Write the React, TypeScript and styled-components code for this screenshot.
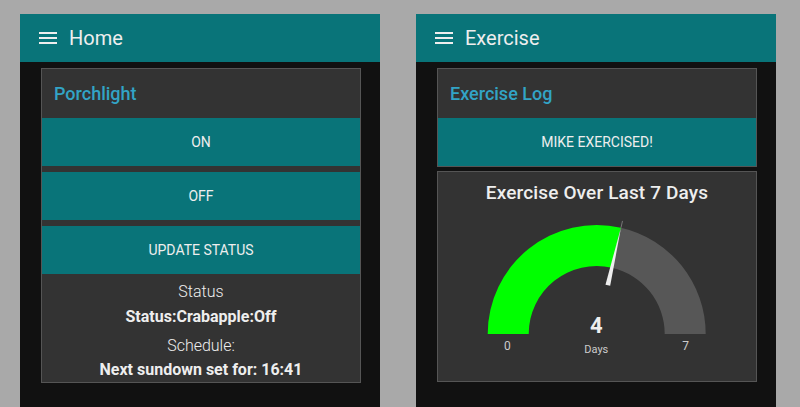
import React from "react";
import styled, { createGlobalStyle } from "styled-components";

const Global = createGlobalStyle`
  html, body { margin: 0; padding: 0; background: #a9a9a9; }
  body { font-family: Roboto, "Liberation Sans", sans-serif; }
`;

const Page = styled.div`
  display: flex;
  gap: 36px;
  padding: 14px 0 0 20px;
  height: 407px;
  box-sizing: border-box;
  overflow: hidden;
`;

const Panel = styled.div`
  width: 360px;
  height: 393px;
  background: #111111;
  display: flex;
  flex-direction: column;
`;

const Header = styled.div`
  height: 48px;
  background: #097479;
  display: flex;
  align-items: center;
  padding-left: 19px;
  gap: 12px;
  color: #eeeeee;
  font-size: 20px;
  flex-shrink: 0;
`;

const Content = styled.div`
  padding: 6px 0 0 21px;
  display: flex;
  flex-direction: column;
  gap: 4px;
`;

const Card = styled.div<{ $h?: number }>`
  width: 320px;
  box-sizing: border-box;
  border: 1px solid #555555;
  background: #333333;
  display: flex;
  flex-direction: column;
  ${(p) => (p.$h ? `height: ${p.$h}px;` : "")}
`;

const CardTitle = styled.div`
  height: 49px;
  display: flex;
  align-items: center;
  padding-left: 12px;
  font-size: 18px;
  font-weight: 500;
  color: #32a4c6;
`;

const Buttons = styled.div`
  display: flex;
  flex-direction: column;
  gap: 6px;
`;

const Button = styled.button`
  height: 48px;
  width: 100%;
  border: none;
  margin: 0;
  background: #097479;
  color: #eeeeee;
  font-family: Roboto, "Liberation Sans", sans-serif;
  font-size: 14px;
  font-weight: 400;
  text-transform: uppercase;
  cursor: pointer;
`;

const TextBlock = styled.div`
  padding-top: 6px;
  display: flex;
  flex-direction: column;
`;

const Row = styled.div<{ $bold?: boolean; $h?: number; $gapAfter?: number }>`
  height: ${(p) => p.$h ?? 24}px;
  line-height: ${(p) => p.$h ?? 24}px;
  text-align: center;
  font-size: 16px;
  color: #eeeeee;
  font-weight: ${(p) => (p.$bold ? 700 : 300)};
  margin-bottom: ${(p) => p.$gapAfter ?? 0}px;
`;

const GaugeTitle = styled.div`
  height: 44px;
  line-height: 42px;
  text-align: center;
  font-size: 19px;
  letter-spacing: 0.15px;
  font-weight: 500;
  color: #eeeeee;
`;

const Hamburger = () => (
  <svg width="18" height="12" viewBox="0 0 18 12">
    <rect x="0" y="0" width="18" height="2" fill="#eeeeee" />
    <rect x="0" y="5" width="18" height="2" fill="#eeeeee" />
    <rect x="0" y="10" width="18" height="2" fill="#eeeeee" />
  </svg>
);

const Gauge = ({ value, max }: { value: number; max: number }) => {
  const cx = 158.7;
  const cy = 118;
  const R = 109;
  const r = 68;
  const phi = (value / max) * Math.PI;
  const px = (rad: number) => cx - rad * Math.cos(phi);
  const py = (rad: number) => cy - rad * Math.sin(phi);
  const green = `M ${cx - R} ${cy} A ${R} ${R} 0 0 1 ${px(R)} ${py(R)} L ${px(r)} ${py(r)} A ${r} ${r} 0 0 0 ${cx - r} ${cy} Z`;
  const gray = `M ${px(R)} ${py(R)} A ${R} ${R} 0 0 1 ${cx + R} ${cy} L ${cx + r} ${cy} A ${r} ${r} 0 0 0 ${px(r)} ${py(r)} Z`;
  const nx = -Math.cos(phi);
  const ny = -Math.sin(phi);
  const tx = -ny;
  const ty = nx;
  const r0 = 50;
  const w = 2.4;
  const b1x = cx + nx * r0 + tx * w;
  const b1y = cy + ny * r0 + ty * w;
  const b2x = cx + nx * r0 - tx * w;
  const b2y = cy + ny * r0 - ty * w;
  const tipx = cx + nx * (R + 1);
  const tipy = cy + ny * (R + 1);
  return (
    <svg width="318" height="165" viewBox="0 0 318 165">
      <path d={green} fill="#00ff00" />
      <path d={gray} fill="#575757" />
      <line
        x1={cx + nx * R}
        y1={cy + ny * R}
        x2={cx + nx * (R + 7)}
        y2={cy + ny * (R + 7)}
        stroke="#777777"
        strokeWidth="1"
      />
      <polygon points={`${b1x},${b1y} ${b2x},${b2y} ${tipx},${tipy}`} fill="#eeeeee" />
      <text x="69.3" y="133.5" fontSize="12" fill="#cccccc" textAnchor="middle" fontFamily="Roboto, sans-serif">
        0
      </text>
      <text x="247.7" y="133.5" fontSize="12" fill="#cccccc" textAnchor="middle" fontFamily="Roboto, sans-serif">
        {max}
      </text>
      <text x="158.3" y="117" fontSize="22" fontWeight="700" fill="#eeeeee" textAnchor="middle" fontFamily="Roboto, sans-serif">
        {value}
      </text>
      <text x="158.3" y="137" fontSize="11" fill="#cccccc" textAnchor="middle" fontFamily="Roboto, sans-serif">
        Days
      </text>
    </svg>
  );
};

export default function App() {
  return (
    <>
      <Global />
      <Page>
        <Panel>
          <Header>
            <Hamburger />
            <span>Home</span>
          </Header>
          <Content>
            <Card>
              <CardTitle>Porchlight</CardTitle>
              <Buttons>
                <Button>On</Button>
                <Button>Off</Button>
                <Button>Update Status</Button>
              </Buttons>
              <TextBlock>
                <Row>Status</Row>
                <Row $bold $h={26} $gapAfter={4}>
                  Status:Crabapple:Off
                </Row>
                <Row>Schedule:</Row>
                <Row $bold>Next sundown set for: 16:41</Row>
              </TextBlock>
            </Card>
          </Content>
        </Panel>
        <Panel>
          <Header>
            <Hamburger />
            <span>Exercise</span>
          </Header>
          <Content>
            <Card>
              <CardTitle>Exercise Log</CardTitle>
              <Button>Mike Exercised!</Button>
            </Card>
            <Card $h={211}>
              <GaugeTitle>Exercise Over Last 7 Days</GaugeTitle>
              <Gauge value={4} max={7} />
            </Card>
          </Content>
        </Panel>
      </Page>
    </>
  );
}
